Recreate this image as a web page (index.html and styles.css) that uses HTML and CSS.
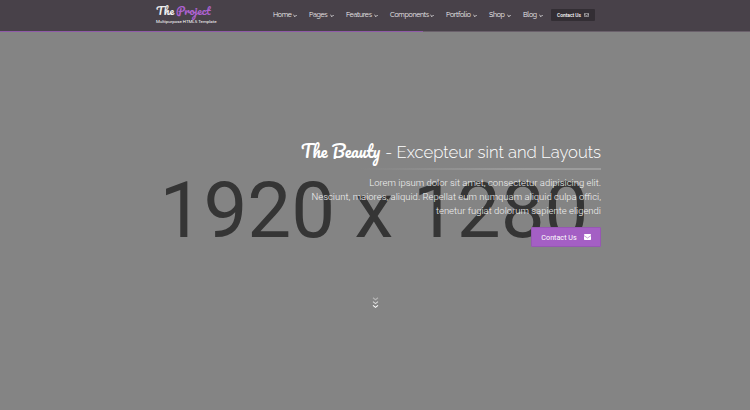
FILE: index.html
```html
<!DOCTYPE html>
<html lang="en">
<head>
<meta charset="utf-8">
<title>The Project</title>
<link rel="stylesheet" href="styles.css">
</head>
<body>
<svg class="defs" width="0" height="0">
  <symbol id="chev" viewBox="0 0 4 4"><path d="M.4 1 2 2.6 3.6 1" fill="none" stroke="currentColor" stroke-width=".9"/></symbol>
</svg>
<header class="header">
  <div class="brand">
    <div class="logo"><span class="w1">The</span><span class="w2">Project</span></div>
    <div class="slogan">Multipurpose HTML5 Template</div>
  </div>
  <nav class="nav">
    <a class="home">Home<svg><use href="#chev"/></svg></a>
    <a class="pages">Pages<svg><use href="#chev"/></svg></a>
    <a class="features">Features<svg><use href="#chev"/></svg></a>
    <a class="components">Components<svg><use href="#chev"/></svg></a>
    <a class="portfolio">Portfolio<svg><use href="#chev"/></svg></a>
    <a class="shop">Shop<svg><use href="#chev"/></svg></a>
    <a class="blog">Blog<svg><use href="#chev"/></svg></a>
  </nav>
  <a class="header-btn">Contact Us<svg width="5" height="4" viewBox="0 0 5 4" fill="none" stroke="#ddd" stroke-width=".6"><rect x=".3" y=".3" width="4.4" height="3.4" rx=".4"/><path d="M.3 1.2 2.5 2.6 4.7 1.2"/></svg></a>
</header>
<main class="hero">
  <div class="placeholder">1920 x 1280</div>
  <section class="caption">
    <h1><span class="script">The Beauty</span><span class="title">- Excepteur sint and Layouts</span></h1>
    <div class="rule"></div>
    <p>Lorem ipsum dolor sit amet, consectetur adipisicing elit.<br>Nesciunt, maiores, aliquid. Repellat eum numquam aliquid culpa offici,<br>tenetur fugiat dolorum sapiente eligendi</p>
    <a class="btn">Contact Us<svg width="7" height="6" viewBox="0 0 7 6"><rect width="7" height="6" rx=".7" fill="#fff"/><path d="M0 1.6 3.5 4 7 1.6" fill="none" stroke="#a45fc4" stroke-width=".6"/></svg></a>
  </section>
  <svg class="scroll" width="7" height="12" viewBox="0 0 7 12" fill="none" stroke="#fff" stroke-width="1.1"><path d="M1 .8 3.5 2.8 6 .8" opacity=".4"/><path d="M1 4.6 3.5 6.6 6 4.6" opacity=".7"/><path d="M1 8.4 3.5 10.4 6 8.4"/></svg>
</main>
</body>
</html>
```
FILE: styles.css
```css
* { box-sizing: border-box; }
body {
  margin: 0;
  height: 410px;
  overflow: hidden;
  background: #848484;
  font-family: Roboto, "Liberation Sans", sans-serif;
  color: #fff;
}
.defs { display: block; }
.header {
  display: flex;
  align-items: flex-start;
  height: 32px;
  padding-left: 156px;
  background:
    linear-gradient(90deg, #8f5aa8 423px, #6a606b 423px) 0 100% / 100% 1px no-repeat,
    #484149;
}
.brand { width: 117px; white-space: nowrap; }
.logo {
  display: flex;
  gap: 2px;
  height: 18px;
  font: 400 11.2px/20px Pacifico, cursive;
  color: #eee;
}
.w2 { color: #ad62d0; }
.slogan { font-size: 4.4px; line-height: 8px; color: #fff; }
.nav {
  display: flex;
  width: 278px;
  height: 30px;
  align-items: center;
  font: 400 7px/10px Raleway, "Open Sans", sans-serif;
  letter-spacing: -.3px;
  color: #f2f0f2;
}
.nav a { display: flex; align-items: center; justify-content: space-between; flex: none; white-space: nowrap; }
.nav svg { width: 4px; height: 4px; margin-top: 1px; }
.home { width: 24px; margin-right: 12px; }
.pages { width: 25px; margin-right: 12px; }
.features { width: 32px; margin-right: 12px; }
.components { width: 44px; margin-right: 12px; }
.portfolio { width: 31px; margin-right: 12px; }
.shop { width: 22px; margin-right: 12px; }
.blog { width: 20px; }
.header-btn {
  display: flex;
  align-items: center;
  justify-content: center;
  gap: 3px;
  width: 44px;
  height: 12px;
  margin-top: 9px;
  background: #332e34;
  border-radius: 1px;
  font-size: 4.9px;
  font-weight: 500;
  white-space: nowrap;
}
.hero { display: grid; height: 378px; grid-template: 378px / 750px; }
.hero > * { grid-area: 1 / 1; }
.placeholder {
  justify-self: center;
  margin-top: 131px;
  padding-right: 2px;
  font-size: 78.2px;
  line-height: 94px;
  color: #353535;
  white-space: nowrap;
}
.caption {
  display: flex;
  flex-direction: column;
  align-items: flex-end;
  width: 601px;
  padding-top: 105px;
}
h1 {
  display: flex;
  align-items: baseline;
  gap: 5px;
  margin: 0;
  height: 31px;
  line-height: 28px;
  white-space: nowrap;
}
.script { font: 400 16.4px/28px Pacifico, cursive; }
.title { font: 300 16.65px/28px Raleway, "Open Sans", sans-serif; }
.rule { width: 301px; height: 2px; background: linear-gradient(90deg, #848484 20%, #9c9c9c 75%); }
.caption p {
  margin: 6px 0 9px;
  font-size: 9.5px;
  font-weight: 300;
  line-height: 14px;
  text-align: right;
  white-space: nowrap;
  color: #f2f2f2;
}
.btn {
  display: flex;
  align-items: center;
  justify-content: center;
  gap: 7px;
  width: 70px;
  height: 20px;
  background: #a45fc4;
  border: 1px solid #9657b3;
  border-radius: 1px;
  font-size: 7.2px;
}
.scroll { justify-self: center; margin-top: 265px; }
```
